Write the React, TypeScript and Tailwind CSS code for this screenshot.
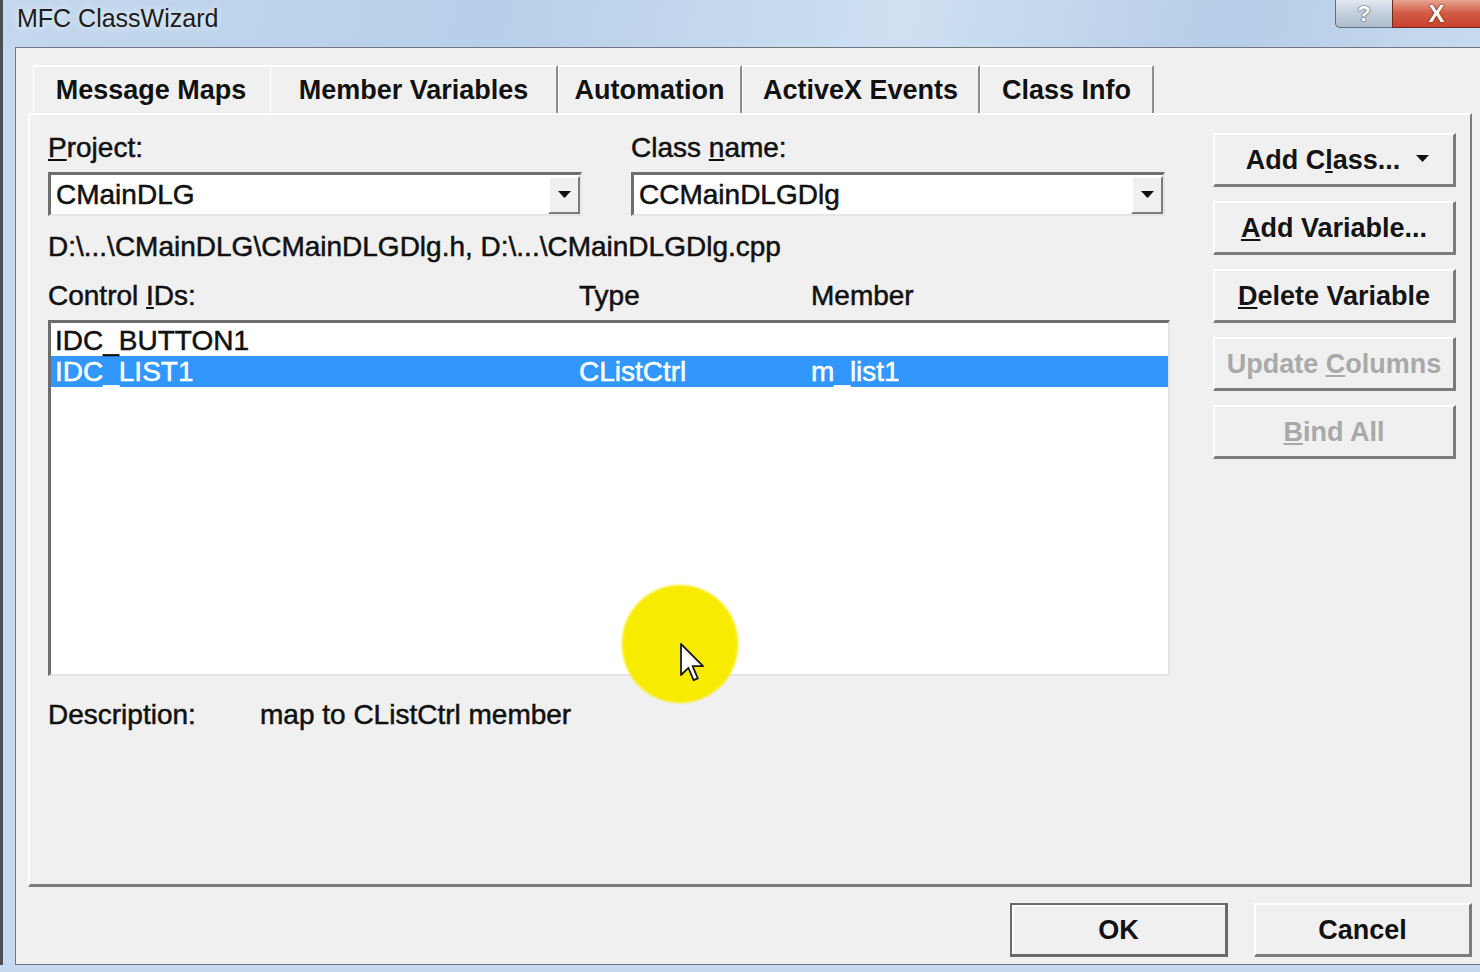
import type { ReactNode } from 'react'

function RaisedButton({
  children,
  disabled,
  extra,
}: {
  children: ReactNode
  disabled?: boolean
  extra?: ReactNode
}) {
  return (
    <div
      className={`relative flex h-[54px] items-center justify-center border-t-2 border-l-2 border-t-white border-l-white border-r-[3px] border-b-[3px] border-r-[#7c7c7c] border-b-[#7c7c7c] bg-[#f0f0f0] text-[27px] font-bold leading-[32px] ${
        disabled ? 'text-[#a9a9a9]' : 'text-[#141414]'
      }`}
    >
      {children}
      {extra}
    </div>
  )
}

function DownArrow() {
  return (
    <svg width="13" height="8" viewBox="0 0 13 8">
      <polygon points="0,0 13,0 6.5,7" fill="#111" />
    </svg>
  )
}

function Combo({ value }: { value: string }) {
  return (
    <div className="flex h-[44px] w-[534px] items-center border-t-[3px] border-l-[3px] border-t-[#6e6e6e] border-l-[#6e6e6e] border-b-2 border-r-2 border-b-[#e6e6e6] border-r-[#e6e6e6] bg-white">
      <span className="flex-1 pl-[5px] text-[28px] leading-[32px] text-[#111]">{value}</span>
      <div className="flex h-[38px] w-[32px] items-center justify-center border-t-2 border-l-2 border-t-white border-l-white border-r-2 border-b-2 border-r-[#7c7c7c] border-b-[#7c7c7c] bg-[#f0f0f0]">
        <DownArrow />
      </div>
    </div>
  )
}

const tabs = [
  { label: 'Message Maps', w: 'w-[237px]', edge: 'border-r-transparent' },
  { label: 'Member Variables', w: 'w-[288px]', edge: 'border-r-[#8d8d8d]' },
  { label: 'Automation', w: 'w-[184px]', edge: 'border-r-[#8d8d8d]' },
  { label: 'ActiveX Events', w: 'w-[238px]', edge: 'border-r-[#8d8d8d]' },
  { label: 'Class Info', w: 'w-[174px]', edge: 'border-r-[#8d8d8d]' },
]

export default function App() {
  return (
    <div className="relative flex h-[972px] w-[1480px] flex-col overflow-hidden bg-[linear-gradient(100deg,#c3d8ee_0%,#b7cfe8_30%,#cfe0f2_55%,#b6cde7_75%,#d3e3f4_100%)] font-['Liberation_Sans',Arial,sans-serif]">
      {/* title bar */}
      <div className="flex h-[47px] shrink-0 items-start">
        <div className="h-full w-[3px] bg-[#4b4f55]" />
        <div className="pl-[14px] pt-[3px] text-[25px] leading-[30px] text-[#1c1c1c] [text-shadow:0_0_8px_#ffffff]">
          MFC ClassWizard
        </div>
        <div className="ml-auto flex h-[28px]">
          <div className="flex w-[57px] items-center justify-center rounded-bl-[5px] border-b border-l border-[#5f6e80] bg-[linear-gradient(#e3eaf2,#c3cfdc_50%,#aebccc)] text-[22px] font-bold leading-none text-white [text-shadow:0_0_2px_#3b4a5c,0_0_1px_#3b4a5c]">
            ?
          </div>
          <div className="flex w-[88px] items-center justify-center border-b border-l border-[#6b2a20] bg-[linear-gradient(#e8a493,#d25a44_50%,#c7412b)] text-[24px] font-bold leading-none text-white [text-shadow:0_0_2px_#5a1a10,0_0_1px_#5a1a10]">
            X
          </div>
        </div>
      </div>

      {/* frame + client */}
      <div className="flex min-h-0 flex-1">
        <div className="w-[3px] bg-[#4b4f55]" />
        <div className="w-[12px] bg-[#c6daef]" />
        <div className="flex flex-1 flex-col border-t border-l border-b border-[#6d7785] bg-[#f0f0f0] pl-[12px] pr-[8px] pt-[17px]">
          {/* tabs */}
          <div className="ml-[5px] flex h-[48px]">
            {tabs.map((t) => (
              <div
                key={t.label}
                className={`flex ${t.w} ${t.edge} items-center justify-center border-t-2 border-l border-t-white border-l-white border-r-2 text-[27px] font-bold leading-[32px] text-[#111]`}
              >
                {t.label}
              </div>
            ))}
          </div>

          {/* tab page */}
          <div className="flex h-[774px] border-t-2 border-l-2 border-t-white border-l-white border-r-2 border-b-[3px] border-r-[#7c7c7c] border-b-[#7c7c7c] pl-[18px] pr-[14px]">
            {/* left column */}
            <div className="flex w-[1122px] flex-col pt-[17px] text-[28px] leading-[32px] text-[#111] [-webkit-text-stroke:0.5px_currentColor]">
              <div className="flex gap-[49px]">
                <div className="flex flex-col">
                  <div className="h-[32px]">
                    <u>P</u>roject:
                  </div>
                  <div className="mt-[8px]">
                    <Combo value="CMainDLG" />
                  </div>
                </div>
                <div className="flex flex-col">
                  <div className="h-[32px]">
                    Class <u>n</u>ame:
                  </div>
                  <div className="mt-[8px]">
                    <Combo value="CCMainDLGDlg" />
                  </div>
                </div>
              </div>

              <div className="mt-[15px] h-[32px]">D:\...\CMainDLG\CMainDLGDlg.h, D:\...\CMainDLGDlg.cpp</div>

              <div className="mt-[17px] grid h-[32px] grid-cols-[531px_232px_1fr]">
                <span>
                  Control <u>I</u>Ds:
                </span>
                <span>Type</span>
                <span>Member</span>
              </div>

              {/* list box */}
              <div className="mt-[8px] h-[356px] w-[1122px] border-t-[3px] border-l-[3px] border-t-[#6e6e6e] border-l-[#6e6e6e] border-b-2 border-r-2 border-b-[#e3e3e3] border-r-[#e3e3e3] bg-white pt-[2px]">
                <div className="grid h-[31px] grid-cols-[524px_232px_1fr] items-center pl-[4px]">
                  <span>IDC_BUTTON1</span>
                  <span />
                  <span />
                </div>
                <div className="grid h-[31px] grid-cols-[524px_232px_1fr] items-center bg-[#3297fb] pl-[4px] text-white">
                  <span>IDC_LIST1</span>
                  <span>CListCtrl</span>
                  <span>m_list1</span>
                </div>
              </div>

              <div className="mt-[23px] flex h-[32px]">
                <span className="w-[212px]">Description:</span>
                <span>map to CListCtrl member</span>
              </div>
            </div>

            {/* right buttons */}
            <div className="ml-auto flex w-[243px] flex-col gap-[14px] pt-[18px]">
              <RaisedButton
                extra={
                  <span className="absolute right-[24px] top-[20px]">
                    <DownArrow />
                  </span>
                }
              >
                <span className="-ml-[22px]">
                  Add C<u>l</u>ass...
                </span>
              </RaisedButton>
              <RaisedButton>
                <span>
                  <u>A</u>dd Variable...
                </span>
              </RaisedButton>
              <RaisedButton>
                <span>
                  <u>D</u>elete Variable
                </span>
              </RaisedButton>
              <RaisedButton disabled>
                <span>
                  Update <u>C</u>olumns
                </span>
              </RaisedButton>
              <RaisedButton disabled>
                <span>
                  <u>B</u>ind All
                </span>
              </RaisedButton>
            </div>
          </div>

          {/* OK / Cancel */}
          <div className="mt-[16px] flex justify-end gap-[26px]">
            <div className="flex h-[54px] w-[218px] items-center justify-center border-2 border-[#6a6a6a] border-r-[3px] border-b-[3px] bg-[#f0f0f0] text-[27px] font-bold leading-[32px] text-[#111] shadow-[inset_2px_2px_0_#ffffff]">
              OK
            </div>
            <div className="flex h-[54px] w-[218px] items-center justify-center border-t-2 border-l-2 border-t-white border-l-white border-r-[3px] border-b-[3px] border-r-[#7c7c7c] border-b-[#7c7c7c] bg-[#f0f0f0] text-[27px] font-bold leading-[32px] text-[#111]">
              Cancel
            </div>
          </div>
        </div>
      </div>
      <div className="h-[7px] shrink-0 bg-[#c6daef]" />

      {/* cursor highlight overlay */}
      <div className="absolute left-[622px] top-[585px] h-[118px] w-[116px] rounded-full bg-[#f7ec00] blur-[1px]" />
      <svg
        className="absolute left-[680px] top-[643px]"
        width="26"
        height="40"
        viewBox="0 0 13 20"
      >
        <path
          d="M0.5 0.5 L0.5 16 L4.2 12.4 L6.8 18.6 L8.9 17.7 L6.3 11.6 L11.5 11.6 Z"
          fill="#ffffff"
          stroke="#1a1a1a"
          strokeWidth="0.9"
          strokeLinejoin="round"
        />
      </svg>
    </div>
  )
}
